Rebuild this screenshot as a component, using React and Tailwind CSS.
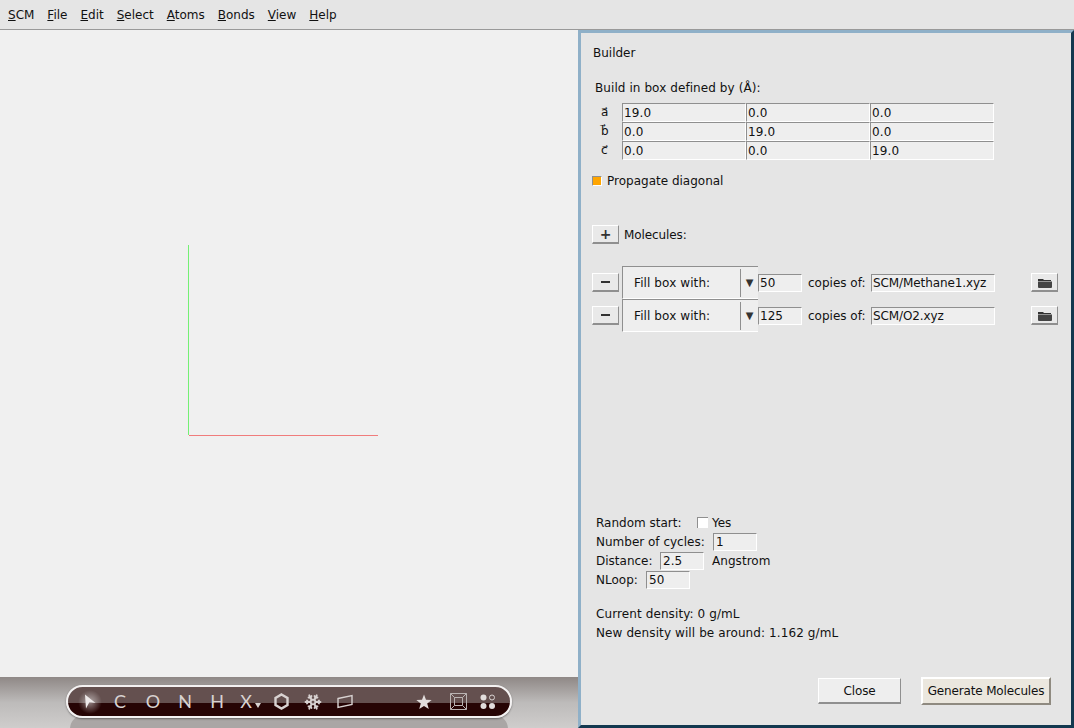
import { Snowflake } from 'lucide-react';

const menus = [
  ['S', 'CM'],
  ['F', 'ile'],
  ['E', 'dit'],
  ['S', 'elect'],
  ['A', 'toms'],
  ['B', 'onds'],
  ['V', 'iew'],
  ['H', 'elp'],
];

const box = [
  ['a\u20D7', '19.0', '0.0', '0.0'],
  ['b\u20D7', '0.0', '19.0', '0.0'],
  ['c\u20D7', '0.0', '0.0', '19.0'],
];

const sunken = 'bg-[#eeeeee] border-l border-t border-[#8f8f8f] border-r-white border-b-white border-r border-b';

function Field({ value, className }) {
  return <div className={`${sunken} h-[18px] leading-[16px] ${className}`}>{value}</div>;
}

function SmallButton({ children }) {
  return (
    <div className="w-[27px] h-[19px] bg-[#e9e9e9] border border-[#8f8f8f] border-t-white border-l-white border-b-2 border-r-[#8f8f8f] flex items-center justify-center text-[#333]">
      {children}
    </div>
  );
}

function MoleculeRow({ copies, file }) {
  return (
    <div className="flex items-center h-[33px]">
      <SmallButton>
        <div className="w-[9px] h-[2px] bg-[#333]" />
      </SmallButton>
      <div className="ml-[3px] w-[136px] h-[33px] bg-[#eeeeee] border-t border-l border-[#8f8f8f] border-b border-b-white flex items-center">
        <span className="ml-[11px] w-[106px] tracking-[0.1px]">Fill box with:</span>
        <div className="w-[18px] h-[28px] border-l border-[#8f8f8f] flex items-center justify-center text-[#333] text-[10px]">▼</div>
      </div>
      <Field value={copies} className="w-[44px] pl-[1px]" />
      <span className="ml-[6px] w-[63px]">copies of:</span>
      <Field value={file} className="w-[124px] pl-[1px] tracking-[-0.1px]" />
      <div className="ml-[36px]">
        <SmallButton>
          <svg width="16" height="11" viewBox="0 0 16 11">
            <path d="M1 2h5l1 1h7v1H1z" fill="#333" />
            <path d="M1 4.5h14V10a1 1 0 0 1-1 1H2a1 1 0 0 1-1-1z" fill="#444" />
          </svg>
        </SmallButton>
      </div>
    </div>
  );
}

function ToolItem({ children, className = '' }) {
  return <div className={`w-8 h-full flex items-center justify-center ${className}`}>{children}</div>;
}

export default function App() {
  return (
    <div className="w-[1074px] h-[728px] overflow-hidden bg-[#f0f0f0] text-[12px] text-[#111] flex flex-col font-['DejaVu_Sans',sans-serif]">
      <div className="h-[30px] shrink-0 bg-[#e5e5e5] border-b border-[#999] flex items-center pl-[8px] gap-[13px]">
        {menus.map(([key, rest], i) => (
          <span key={i}>
            <span className="underline">{key}</span>
            {rest}
          </span>
        ))}
      </div>

      <div className="flex flex-1 min-h-0">
        <div className="w-[578px] flex flex-col">
          <div className="flex-1 min-h-0">
            <svg width="578" height="647">
              <line x1="188.5" y1="215" x2="188.5" y2="405" stroke="#74f074" />
              <line x1="189" y1="405.5" x2="378" y2="405.5" stroke="#f07c7c" />
            </svg>
          </div>

          <div className="relative h-[51px] bg-gradient-to-b from-[#8f8886] via-[#bdbbba] to-[#cfcdcc] overflow-hidden">
            <div className="absolute left-[70px] top-[38px] w-[438px] h-[30px] rounded-t-[14px] bg-[#aaa6a5]" />
            <div className="relative ml-[66px] mt-[8px] w-[446px] h-[33px] rounded-full border-2 border-[#f4f2f2] bg-gradient-to-b from-[#64504f] from-55% to-[#260404] to-55% flex items-center pl-[6px] text-[#d8d2d1] text-[18px] font-['Lato',sans-serif] shadow-[0_1px_2px_rgba(0,0,0,0.4)]">
              <ToolItem>
                <div className="relative flex items-center justify-center">
                  <div className="absolute w-[24px] h-[24px] rounded-full bg-[radial-gradient(circle,rgba(255,255,255,0.5),rgba(255,255,255,0)_70%)]" />
                  <svg className="relative" width="12" height="15" viewBox="0 0 12 15">
                    <path d="M1 0.5 L11.5 9 L5.5 8 L2 14.5z" fill="#eeeaea" />
                  </svg>
                </div>
              </ToolItem>
              <ToolItem className="-ml-[2px]">C</ToolItem>
              <ToolItem className="ml-[1px]">O</ToolItem>
              <ToolItem>N</ToolItem>
              <ToolItem>H</ToolItem>
              <ToolItem className="-ml-[3px]">
                <span className="relative">
                  X
                  <span className="absolute -right-[9px] top-[15px] w-0 h-0 border-x-[3px] border-x-transparent border-t-[5px] border-t-[#d8d2d1]" />
                </span>
              </ToolItem>
              <ToolItem className="ml-[3px]">
                <svg width="15" height="17" viewBox="0 0 15 17">
                  <path d="M7.5 1.5 L13.5 5 V12 L7.5 15.5 L1.5 12 V5z" fill="none" stroke="#d8d2d1" strokeWidth="2.4" />
                </svg>
              </ToolItem>
              <ToolItem>
                <Snowflake size={18} strokeWidth={2.4} />
              </ToolItem>
              <ToolItem>
                <svg width="16" height="15" viewBox="0 0 16 15">
                  <path d="M1 4.5 L15 1.5 V10.5 L1 13.5z" fill="none" stroke="#d8d2d1" strokeWidth="1.4" />
                </svg>
              </ToolItem>
              <ToolItem className="ml-[47px]">
                <svg width="16" height="16" viewBox="0 0 16 16">
                  <path d="M8 0.5 L10 5.8 L15.7 6 L11.2 9.5 L12.8 15 L8 11.9 L3.2 15 L4.8 9.5 L0.3 6 L6 5.8z" fill="#e2dddc" />
                </svg>
              </ToolItem>
              <ToolItem className="ml-[2px]">
                <svg width="17" height="17" viewBox="0 0 17 17">
                  <path d="M0.5 0.5H16.5V16.5H0.5z M4.5 4.5H12.5V12.5H4.5z M0.5 0.5L4.5 4.5 M16.5 0.5L12.5 4.5 M0.5 16.5L4.5 12.5 M16.5 16.5L12.5 12.5" fill="none" stroke="#b9b3b2" strokeWidth="1" />
                </svg>
              </ToolItem>
              <ToolItem className="-ml-[2px]">
                <svg width="16" height="16" viewBox="0 0 16 16">
                  <circle cx="3.5" cy="3.5" r="3" fill="#e2dddc" />
                  <circle cx="12" cy="3.5" r="2.5" fill="none" stroke="#d8d2d1" />
                  <circle cx="3.5" cy="12" r="3" fill="#e2dddc" />
                  <circle cx="12" cy="12" r="3" fill="#e2dddc" />
                </svg>
              </ToolItem>
            </div>
          </div>
        </div>

        <div className="w-[496px] bg-[#e5e5e5] border-[3px] border-t-[#8fb0c8] border-l-[#8fb0c8] border-r-[#13384f] border-b-[#13384f] flex flex-col">
          <div className="ml-[12px] mt-[12px] h-[16px] leading-[16px]">Builder</div>
          <div className="ml-[14px] mt-[19px] h-[16px] leading-[16px] tracking-[0.08px]">Build in box defined by (Å):</div>

          <div className="ml-[41px] mt-[7px] flex flex-col">
            {box.map(([label, ...cells]) => (
              <div key={label} className="relative flex h-[19px]">
                <span className="absolute -left-[21px] top-0 leading-[19px]">{label}</span>
                {cells.map((v, i) => (
                  <div key={i} className={`w-[124px] h-[19px] pl-[1px] leading-[18px] tracking-[0.1px] ${sunken}`}>
                    {v}
                  </div>
                ))}
              </div>
            ))}
          </div>

          <div className="ml-[11px] mt-[13px] flex items-center h-[16px]">
            <div className="w-[10px] h-[10px] bg-[#ffa500] border-l border-t border-[#8f8f8f] border-r border-b border-r-white border-b-white" />
            <span className="ml-[5px]">Propagate diagonal</span>
          </div>

          <div className="ml-[11px] mt-[35px] flex items-center h-[20px]">
            <SmallButton>
              <span className="text-[14px] leading-none font-bold">+</span>
            </SmallButton>
            <span className="ml-[5px] pt-[2px] tracking-[-0.1px]">Molecules:</span>
          </div>

          <div className="ml-[11px] mt-[22px] flex flex-col">
            <MoleculeRow copies="50" file="SCM/Methane1.xyz" />
            <MoleculeRow copies="125" file="SCM/O2.xyz" />
          </div>

          <div className="ml-[15px] mt-[181px] flex flex-col">
            <div className="flex items-center h-[19px]">
              <span className="w-[101px]">Random start:</span>
              <div className="w-[11px] h-[11px] bg-white border-l border-t border-[#8f8f8f]" />
              <span className="ml-[4px]">Yes</span>
            </div>
            <div className="flex items-center h-[19px]">
              <span className="w-[117px]">Number of cycles:</span>
              <Field value="1" className="w-[44px] pl-[2px]" />
            </div>
            <div className="flex items-center h-[19px]">
              <span className="w-[64px]">Distance:</span>
              <Field value="2.5" className="w-[44px] pl-[2px]" />
              <span className="ml-[8px] tracking-[0.05px]">Angstrom</span>
            </div>
            <div className="flex items-center h-[19px]">
              <span className="w-[50px]">NLoop:</span>
              <Field value="50" className="w-[44px] pl-[2px]" />
            </div>
            <div className="mt-[16px] h-[19px] leading-[19px] tracking-[0.1px]">Current density: 0 g/mL</div>
            <div className="h-[19px] leading-[19px] tracking-[0.1px]">New density will be around: 1.162 g/mL</div>
          </div>

          <div className="mt-[34px] flex items-center justify-end pr-[20px] gap-[20px]">
            <div className="w-[83px] h-[26px] bg-[#eeeeee] border border-white border-r-[#8f8f8f] border-b-2 border-b-[#8f8f8f] flex items-center justify-center tracking-[-0.1px]">
              Close
            </div>
            <div className="w-[130px] h-[28px] bg-[#ebe7de] border-2 border-white border-r-[#8f8a80] border-b-[#8f8a80] flex items-center justify-center tracking-[-0.15px]">
              Generate Molecules
            </div>
          </div>
        </div>
      </div>
    </div>
  );
}
